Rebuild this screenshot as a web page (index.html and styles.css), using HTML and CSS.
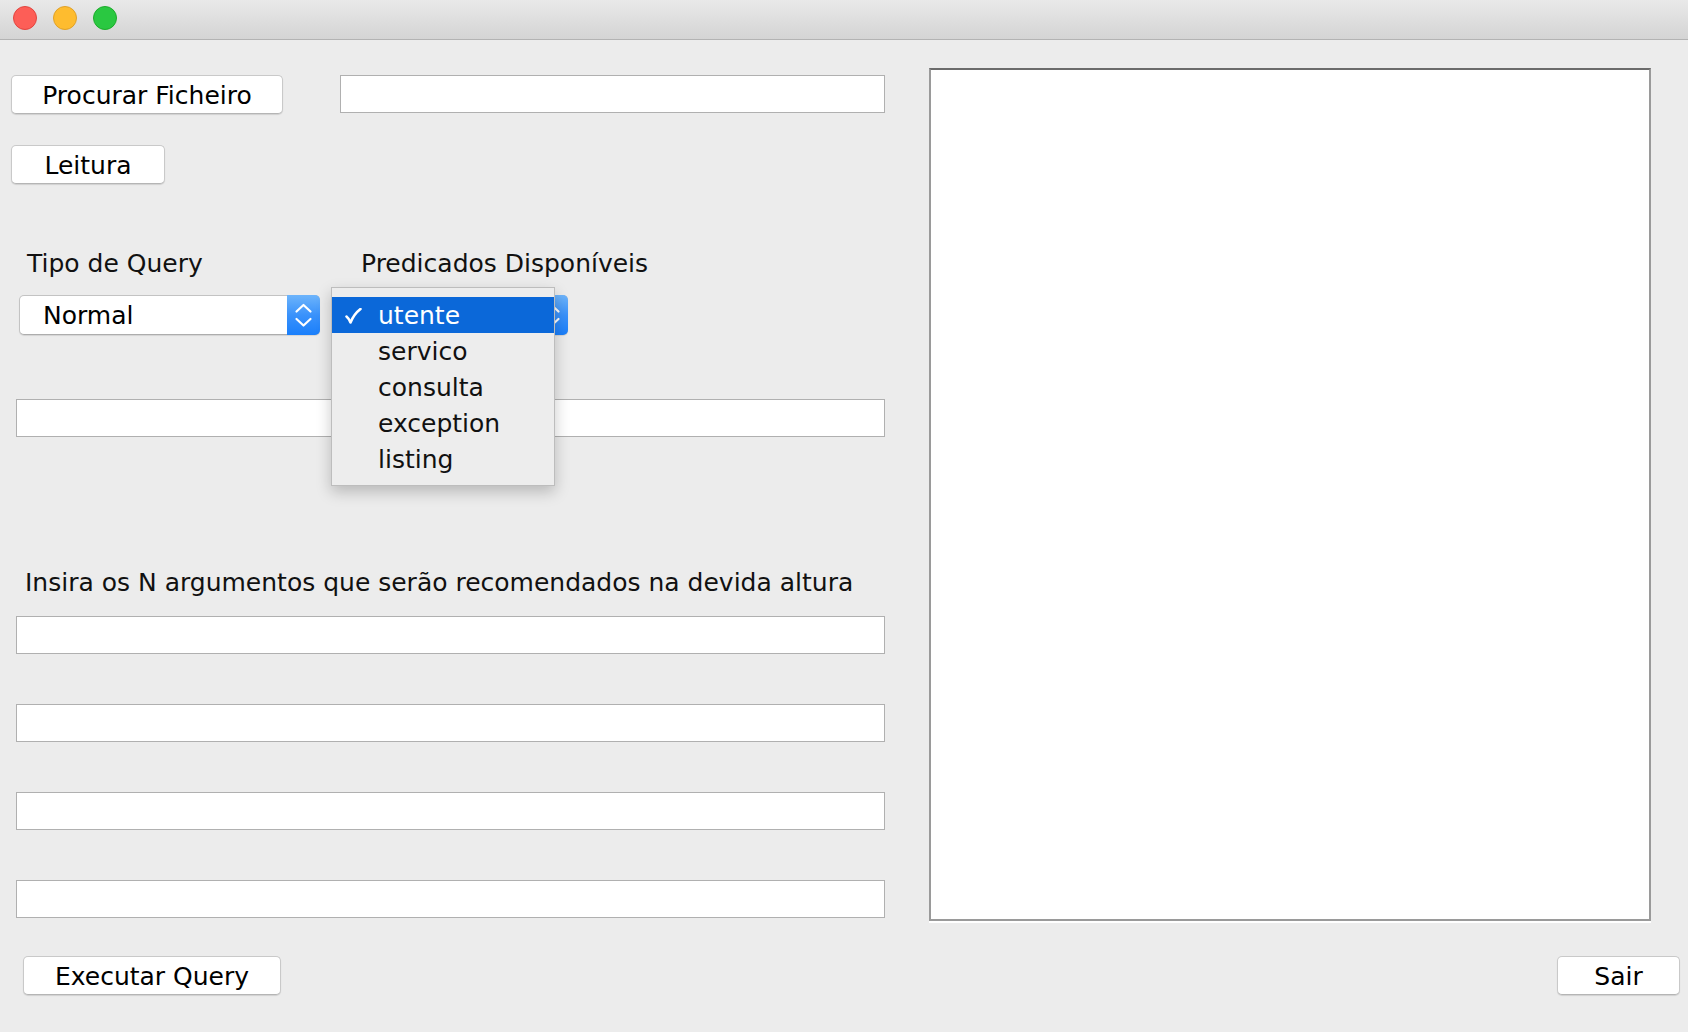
FILE: index.html
```html
<!DOCTYPE html>
<html lang="pt">
<head>
<meta charset="utf-8">
<title>Query</title>
<link rel="stylesheet" href="styles.css">
</head>
<body>
<div class="window">
  <div class="titlebar">
    <span class="light red"></span>
    <span class="light yellow"></span>
    <span class="light green"></span>
  </div>
  <div class="main">
    <div class="left">
      <div class="row row1">
        <button class="btn btn-procurar">Procurar Ficheiro</button>
        <div class="field field-file"></div>
      </div>
      <div class="row row2">
        <button class="btn btn-leitura">Leitura</button>
      </div>
      <div class="row labels">
        <span class="label label-tipo">Tipo de Query</span>
        <span class="label label-pred">Predicados Disponíveis</span>
      </div>
      <div class="row combos">
        <div class="combo combo-tipo">
          <span class="combo-text">Normal</span>
          <span class="combo-arrow">
            <svg width="33" height="38" viewBox="0 0 33 38"><path d="M9.5 15.5 L16.5 9 L23.5 15.5 M9.5 23 L16.5 29.5 L23.5 23" fill="none" stroke="#fff" stroke-width="2.2" stroke-linecap="round" stroke-linejoin="round"/></svg>
          </span>
        </div>
        <div class="combo combo-pred">
          <span class="combo-text">utente</span>
          <span class="combo-arrow">
            <svg width="33" height="38" viewBox="0 0 33 38"><path d="M9.5 15.5 L16.5 9 L23.5 15.5 M9.5 23 L16.5 29.5 L23.5 23" fill="none" stroke="#fff" stroke-width="2.2" stroke-linecap="round" stroke-linejoin="round"/></svg>
          </span>
          <ul class="popup">
            <li class="item selected"><span class="check"><svg width="17" height="16" viewBox="0 0 17 16"><path d="M1.5 8.5 Q3.5 10 5.5 14.5 Q9 6 15.5 1" fill="none" stroke="#fff" stroke-width="2.6" stroke-linecap="round" stroke-linejoin="round"/></svg></span>utente</li>
            <li class="item"><span class="check"></span>servico</li>
            <li class="item"><span class="check"></span>consulta</li>
            <li class="item"><span class="check"></span>exception</li>
            <li class="item"><span class="check"></span>listing</li>
          </ul>
        </div>
      </div>
      <div class="field field-wide field-query"></div>
      <div class="row label-args">
        <span class="label">Insira os N argumentos que serão recomendados na devida altura</span>
      </div>
      <div class="field field-wide field-arg first"></div>
      <div class="field field-wide field-arg"></div>
      <div class="field field-wide field-arg"></div>
      <div class="field field-wide field-arg"></div>
    </div>
    <div class="right">
      <div class="output"></div>
    </div>
  </div>
  <div class="footer">
    <button class="btn btn-exec">Executar Query</button>
    <button class="btn btn-sair">Sair</button>
  </div>
</div>
</body>
</html>
```

FILE: styles.css
```css
* { box-sizing: border-box; }
html, body {
  margin: 0;
  padding: 0;
  background: #ececec;
}
body {
  font-family: "DejaVu Sans", "Liberation Sans", sans-serif;
  font-size: 25px;
  color: #111;
  width: 1688px;
  height: 1032px;
  overflow: hidden;
}
.window {
  display: flex;
  flex-direction: column;
  height: 100%;
}
.titlebar {
  height: 40px;
  background: linear-gradient(#e9e9e9, #d4d4d4);
  border-bottom: 1px solid #b3b3b3;
  display: flex;
  align-items: flex-start;
  padding: 6px 0 0 13px;
  gap: 16px;
  flex: none;
}
.light {
  width: 24px;
  height: 24px;
  border-radius: 50%;
  display: block;
}
.red { background: #fd5e57; border: 1px solid #e2453f; }
.yellow { background: #febc2f; border: 1px solid #e0a128; }
.green { background: #2ac841; border: 1px solid #1dac2b; }

.main {
  display: flex;
  align-items: flex-start;
  height: 883px;
  flex: none;
}
.left {
  width: 885px;
  display: flex;
  flex-direction: column;
}
.row { display: flex; align-items: flex-start; }

.btn {
  font-family: "DejaVu Sans", "Liberation Sans", sans-serif;
  font-size: 25px;
  color: #000;
  background: #fff;
  border: 1px solid #c9c9c9;
  border-bottom-color: #b5b5b5;
  border-radius: 5px;
  box-shadow: 0 1px 1px rgba(0,0,0,0.12);
  height: 39px;
  padding: 2px 0 0;
  line-height: 36px;
  text-align: center;
  display: block;
}

.row1 { margin-top: 35px; }
.btn-procurar { margin-left: 11px; width: 272px; }
.field {
  background: #fff;
  border: 1px solid #b0b0b0;
  height: 38px;
}
.field-file { margin-left: 57px; width: 545px; }

.row2 { margin-top: 31px; }
.btn-leitura { margin-left: 11px; width: 154px; }

.labels { margin-top: 64px; height: 30px; line-height: 32px; }
.label { white-space: nowrap; color: #111; }
.label-tipo { margin-left: 27px; width: 334px; }

.combos { margin-top: 17px; height: 40px; }
.combo {
  position: relative;
  display: flex;
  height: 40px;
  background: #fff;
  border: 1px solid #c3c3c3;
  border-bottom-color: #adadad;
  border-radius: 5px;
  box-shadow: 0 1px 1px rgba(0,0,0,0.1);
}
.combo-tipo { margin-left: 19px; width: 301px; }
.combo-pred { margin-left: 32px; width: 216px; }
.combo-text {
  flex: 1;
  padding-left: 23px;
  line-height: 40px;
  color: #000;
}
.combo-arrow {
  width: 33px;
  margin: -1px -1px -1px 0;
  border-radius: 0 5px 5px 0;
  background: linear-gradient(#6db4fb, #3a92fb 50%, #1a7ffb);
  display: flex;
  align-items: center;
  justify-content: center;
}
.combo-arrow svg { display: block; }

.popup {
  position: absolute;
  left: -22px;
  top: -9px;
  width: 224px;
  margin: 0;
  padding: 9px 0 8px;
  list-style: none;
  background: #ededed;
  border: 1px solid #bdbdbd;
  box-shadow: 0 6px 14px rgba(0,0,0,0.22);
  z-index: 5;
}
.item {
  height: 36px;
  line-height: 38px;
  display: flex;
  color: #111;
  font-size: 25px;
}
.item.selected {
  background: #0b68d9;
  color: #fff;
}
.check {
  width: 46px;
  padding-left: 13px;
  display: flex;
  align-items: center;
  padding-top: 2px;
}
.check svg { display: block; }

.field-wide { margin-left: 16px; width: 869px; }
.field-query { margin-top: 64px; }
.label-args { margin-top: 129px; height: 30px; line-height: 34px; padding-left: 25px; }
.field-arg { margin-top: 50px; }
.field-arg.first { margin-top: 20px; }

.right { margin-left: 44px; margin-top: 28px; }
.output {
  width: 722px;
  height: 853px;
  background: #fff;
  border-top: 2px solid #6b6b6b;
  border-left: 2px solid #9a9a9a;
  border-right: 2px solid #9a9a9a;
  border-bottom: 2px solid #9a9a9a;
  box-shadow: 0 2px 0 #fff;
}

.footer {
  display: flex;
  justify-content: space-between;
  margin-top: 33px;
  padding: 0 8px 0 23px;
}
.btn-exec { width: 258px; }
.btn-sair { width: 123px; }
```
